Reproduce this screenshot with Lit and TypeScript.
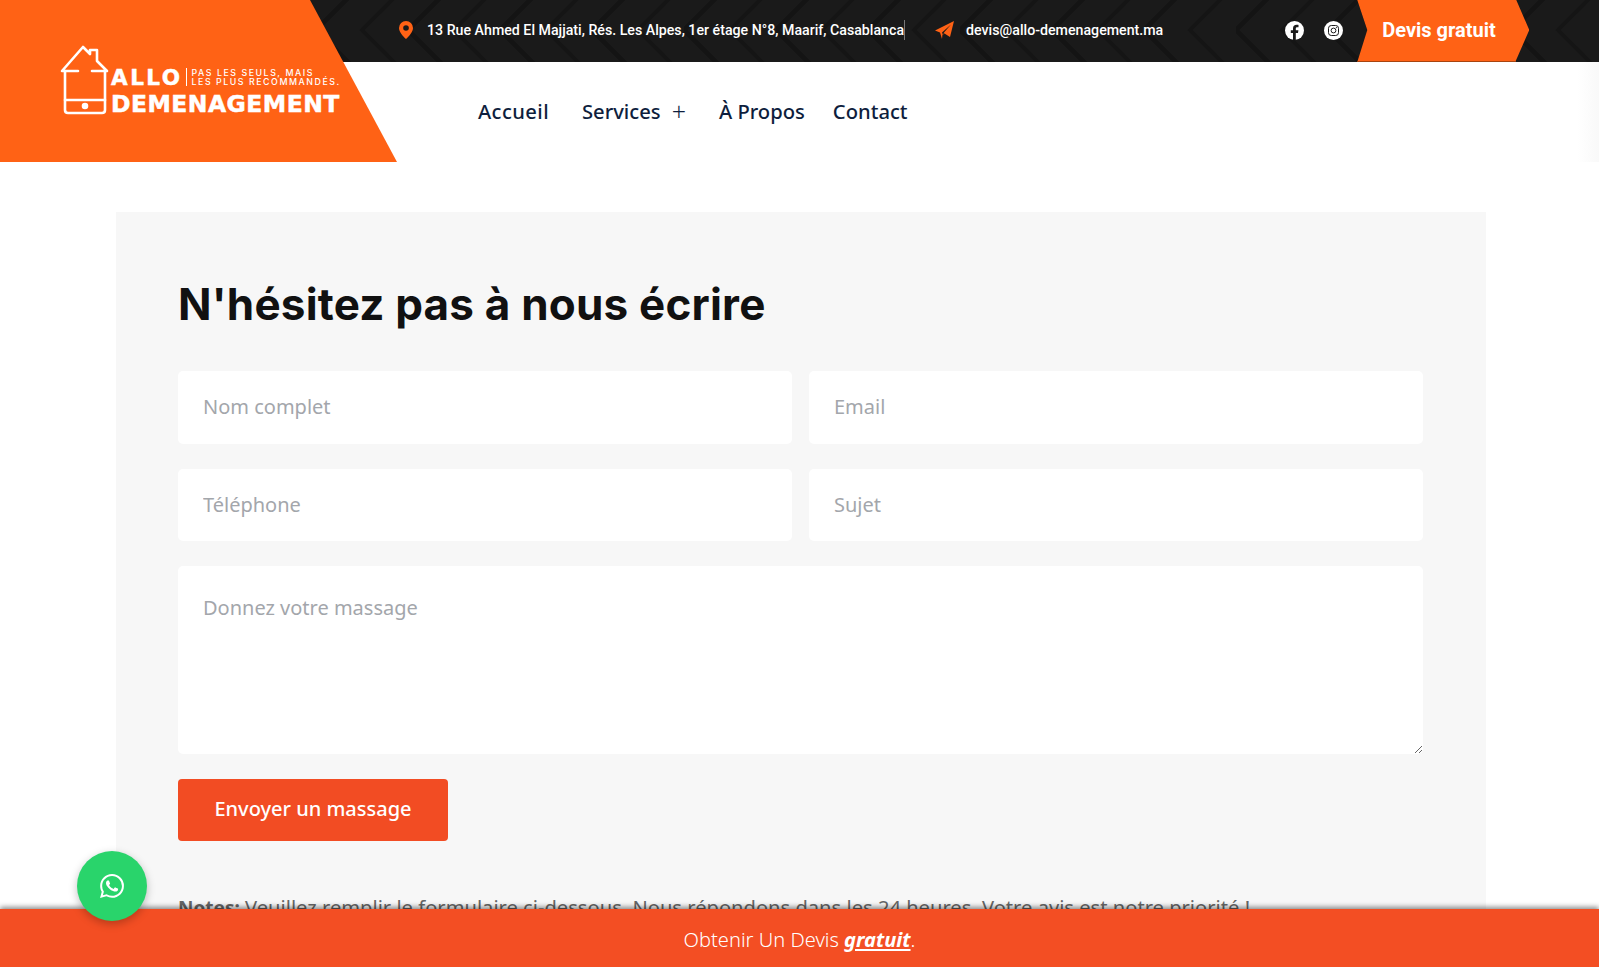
import { LitElement, html, css } from "lit";
import { customElement } from "lit/decorators.js";

@customElement("app-root")
export class AppRoot extends LitElement {
  static styles = css`
    :host { display: block; }
    * { box-sizing: border-box; }
    .page { position: relative; height: 967px; overflow: hidden; background: #fff; font-family: "Noto Sans", sans-serif; }
    header { display: flex; height: 162px; }
    .brand { position: relative; z-index: 2; flex: 0 0 397px; height: 162px; background: #ff6215;
      clip-path: polygon(0 0, 310px 0, 397px 100%, 0 100%); padding: 45px 0 0 60px; }
    .logo { display: flex; align-items: flex-end; gap: 1px; }
    .logo svg { width: 50px; height: 70px; flex: none; }
    .logo-text { color: #fff; display: flex; flex-direction: column; padding-bottom: 1px; }
    .logo-row { display: flex; align-items: center; height: 19px; }
    .allo { font: 700 21.5px/19px "DejaVu Sans", sans-serif; letter-spacing: 2.5px; -webkit-text-stroke: 0.5px #fff; }
    .tag { margin: 0 0 2px 3px; border-left: 1px solid #fff; padding-left: 5px; font: 500 8.8px/9px "Inter", sans-serif; letter-spacing: 1.55px; white-space: nowrap; }
    .dem { margin-top: 7px; font: 700 23.5px/20px "DejaVu Sans", sans-serif; letter-spacing: 0.45px; white-space: nowrap; -webkit-text-stroke: 0.5px #fff; }
    .right { flex: 1; margin-left: -87px; min-width: 0; display: flex; flex-direction: column; }
    .topbar { position: relative; height: 62px; background: #1a1a1a; display: flex; align-items: center; padding-left: 89px; overflow: hidden; font: 500 14.2px/20px Roboto, sans-serif; color: #fff; }
    .pattern { position: absolute; inset: 0; width: 100%; height: 100%; }
    .info { position: relative; display: flex; align-items: center; white-space: nowrap; margin-bottom: 2px; }
    .addr { border-right: 1px solid #777; }
    .pin { width: 14px; height: 18px; margin-right: 14px; flex: none; }
    .plane { width: 19px; height: 19px; margin-left: 30px; margin-right: 12px; flex: none; }
    .social { position: relative; display: flex; gap: 20px; margin: 0 0 2px 122px; }
    .social svg { width: 19px; height: 19px; display: block; }
    .cta { position: relative; margin-left: 14px; width: 172px; height: 62px; flex: none; background: #ff6215; border-bottom: 1px solid #a8430f;
      clip-path: polygon(0 0, 159px 0, 172px 30px, 158px 100%, 0 100%, 10px 30px);
      display: flex; align-items: center; padding: 0 0 2px 25px; font: 700 20px/24px Roboto, sans-serif; color: #fff; }
    nav { flex: 1; display: flex; align-items: center; gap: 33px; padding: 0 0 2px 168px; font-size: 20.2px; font-weight: 500; color: #0e1e3d;
      background: linear-gradient(90deg, #fff calc(100% - 22px), #f9f9f9); }
    nav span { white-space: nowrap; }
    .home { letter-spacing: 0.4px; }
    .plus { margin-left: 11px; font-size: 25px; font-weight: 300; line-height: 20px; vertical-align: -2px; }
    .contact { margin-left: -5px; }
    main { margin: 50px 113px 0 116px; background: #f7f7f7; padding: 62px 63px 0 62px; height: 800px; }
    h1 { margin: 0; font: 700 44px/60px "Inter", sans-serif; color: #111; height: 97px; letter-spacing: 0.2px; }
    .grid { display: grid; grid-template-columns: 1fr 1fr; gap: 25px 17px; }
    input, textarea { display: block; width: 100%; border: 0; outline: 0; background: #fff; border-radius: 5px; padding: 0 25px; font: 400 20px/26px "Noto Sans", sans-serif; color: #333; }
    input { height: 72.5px; padding-bottom: 2px; }
    input:nth-child(n + 3) { padding-bottom: 0; }
    textarea { grid-column: 1 / -1; height: 188px; padding: 29px 25px; }
    ::placeholder { color: #a3a6ab; opacity: 1; }
    button { display: block; margin-top: 25px; width: 270px; height: 62px; border: 0; border-radius: 4px; padding: 0 0 2px; background: #f24c23; color: #fff; font: 500 20px/26px "Noto Sans", sans-serif; }
    .notes { margin: 51px 0 0; font-size: 20.15px; line-height: 30px; color: #666; white-space: nowrap; }
    .notes b { font-weight: 700; font-size: 19px; }
    .bar { position: absolute; left: 0; right: 0; bottom: 0; height: 58px; background: #f34e23; box-shadow: 0 -2px 5px rgba(0,0,0,.45); color: #fff;
      display: flex; align-items: center; justify-content: center; font-size: 20.1px; font-weight: 300; padding-top: 2px; }
    .bar a { color: #fff; font-weight: 700; font-style: italic; text-decoration: underline; margin-left: 5px; }
    .wa { position: absolute; z-index: 3; left: 77px; top: 851px; width: 70px; height: 70px; border-radius: 50%; background: #29d46b; box-shadow: 0 3px 8px rgba(0,0,0,.25); display: flex; align-items: center; justify-content: center; }
    .wa svg { width: 24px; height: 24px; }
  `;

  render() {
    return html`
      <div class="page">
        <header>
          <div class="brand">
            <div class="logo">
              <svg viewBox="0 0 50 70" fill="none" stroke="#fff" stroke-width="2.6" stroke-linecap="round" stroke-linejoin="round">
                <path d="M18 26H2L23 2l7 7V5h7v11l10 10H32" />
                <path d="M5 26v39q0 3 3 3h34q3 0 3-3V26" />
                <path d="M5 55h40" />
                <circle cx="25" cy="61" r="2" fill="#fff" />
              </svg>
              <div class="logo-text">
                <div class="logo-row">
                  <span class="allo">ALLO</span>
                  <span class="tag">PAS LES SEULS, MAIS<br />LES PLUS RECOMMANDÉS.</span>
                </div>
                <div class="dem">DEMENAGEMENT</div>
              </div>
            </div>
          </div>
          <div class="right">
            <div class="topbar">
              <svg class="pattern" aria-hidden="true">
                <defs>
                  <pattern id="chev" width="92" height="92" patternUnits="userSpaceOnUse" x="6" y="-16">
                    <path d="M46 0L0 46l46 46" fill="none" stroke="#141414" stroke-width="5" />
                    <path d="M92 0L46 46l46 46" fill="none" stroke="#151515" stroke-width="4" />
                  </pattern>
                </defs>
                <rect width="100%" height="100%" fill="url(#chev)" />
              </svg>
              <div class="info addr">
                <svg class="pin" viewBox="0 0 14 18"><path fill-rule="evenodd" fill="#ff6215" d="M7 0a7 7 0 0 1 7 7c0 4-4.200 8.300-7 11-2.800-2.700-7-7-7-11a7 7 0 0 1 7-7zm0 4.200a2.800 2.800 0 1 0 0 5.600 2.800 2.800 0 0 0 0-5.600z" /></svg>
                <span>13 Rue Ahmed El Majjati, Rés. Les Alpes, 1er étage N°8, Maarif, Casablanca</span>
              </div>
              <div class="info">
                <svg class="plane" viewBox="0 0 19 19"><path fill="#ff6215" d="M19 0L15 16 9.500 12.500 7.500 13 7 18 5 11.500 0 9.500zM7 11.500L8 14l1-2.500 7-8z" /></svg>
                <span>devis@allo-demenagement.ma</span>
              </div>
              <div class="social">
                <svg viewBox="0 0 19 19"><circle cx="9.500" cy="9.500" r="9.500" fill="#fff" /><path fill="#1a1a1a" d="M8 19v-7H5.800V9.300H8V7.400C8 5 9.400 3.800 11.500 3.800c1 0 1.800.1 2 .1v2.300h-1.300c-1.100 0-1.400.6-1.400 1.300v1.800h2.600L13 12h-2.200v7z" /></svg>
                <svg viewBox="0 0 19 19"><circle cx="9.500" cy="9.500" r="9.500" fill="#fff" /><rect x="4.500" y="4.500" width="10" height="10" rx="2.800" fill="none" stroke="#1a1a1a" stroke-width="1" /><circle cx="9.500" cy="9.500" r="2.400" fill="none" stroke="#1a1a1a" stroke-width="1" /><circle cx="12.400" cy="6.600" r=".6" fill="#1a1a1a" /></svg>
              </div>
              <div class="cta">Devis gratuit</div>
            </div>
            <nav>
              <span class="home">Accueil</span>
              <span>Services<span class="plus">+</span></span>
              <span>À Propos</span>
              <span class="contact">Contact</span>
            </nav>
          </div>
        </header>
        <main>
          <h1>N'hésitez pas à nous écrire</h1>
          <div class="grid">
            <input placeholder="Nom complet" />
            <input placeholder="Email" />
            <input placeholder="Téléphone" />
            <input placeholder="Sujet" />
            <textarea placeholder="Donnez votre massage"></textarea>
          </div>
          <button>Envoyer un massage</button>
          <p class="notes"><b>Notes:</b> Veuillez remplir le formulaire ci-dessous. Nous répondons dans les 24 heures. Votre avis est notre priorité !</p>
        </main>
        <div class="bar"><span>Obtenir Un Devis<a>gratuit</a>.</span></div>
        <div class="wa">
          <svg viewBox="0 0 24 24"><path fill="#fff" d="M17.500 14.400c-.3-.15-1.770-.87-2.040-.97-.27-.1-.47-.15-.67.15-.2.3-.77.97-.94 1.160-.17.2-.35.22-.65.08-.3-.15-1.260-.46-2.400-1.480-.89-.79-1.490-1.770-1.660-2.070-.17-.3-.02-.46.130-.61.130-.130.3-.35.450-.52.150-.17.2-.3.3-.5.100-.2.050-.37-.03-.52-.07-.15-.67-1.610-.92-2.210-.24-.58-.49-.5-.67-.51h-.57c-.2 0-.52.07-.79.37-.27.3-1.040 1.020-1.040 2.480s1.070 2.870 1.210 3.070c.15.2 2.100 3.200 5.080 4.490.71.3 1.260.49 1.690.62.71.23 1.360.19 1.870.12.57-.09 1.770-.72 2.020-1.420.25-.7.250-1.290.17-1.420-.07-.12-.27-.2-.57-.34zM12.050 21.800h-.01a9.870 9.870 0 0 1-5.030-1.380l-.36-.21-3.740.98 1-3.650-.24-.37a9.860 9.860 0 0 1-1.510-5.260c0-5.450 4.440-9.880 9.890-9.880 2.640 0 5.120 1.030 6.990 2.900a9.830 9.830 0 0 1 2.890 6.990c0 5.450-4.440 9.880-9.880 9.880zM20.470 3.490A11.820 11.820 0 0 0 12.050 0C5.490 0 .160 5.340.160 11.890c0 2.100.55 4.140 1.590 5.950L.050 24l6.300-1.650a11.880 11.880 0 0 0 5.690 1.450h.01c6.550 0 11.890-5.340 11.890-11.900a11.820 11.820 0 0 0-3.480-8.410z" /></svg>
        </div>
      </div>
    `;
  }
}
